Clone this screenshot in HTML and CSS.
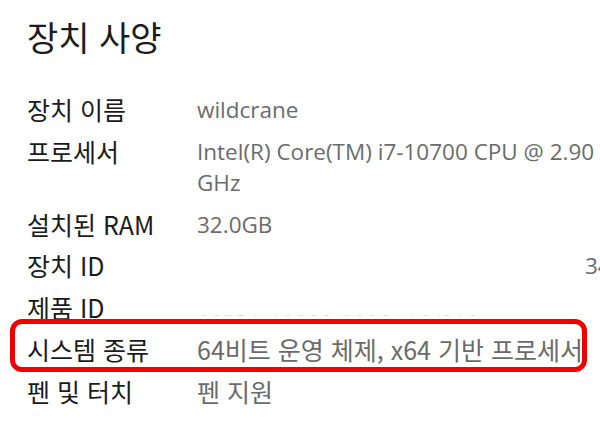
FILE: index.html
```html
<!DOCTYPE html>
<html lang="ko">
<head>
<meta charset="utf-8">
<title>장치 사양</title>
<link rel="stylesheet" href="styles.css">
</head>
<body>
<main class="page">
  <h1 class="title">장치 사양</h1>
  <dl class="specs">
    <div class="row">
      <dt class="label">장치 이름</dt>
      <dd class="value latin">wildcrane</dd>
    </div>
    <div class="row">
      <dt class="label">프로세서</dt>
      <dd class="value latin">Intel(R) Core(TM) i7-10700 CPU @ 2.90 GHz</dd>
    </div>
    <div class="row">
      <dt class="label">설치된 RAM</dt>
      <dd class="value latin">32.0GB</dd>
    </div>
    <div class="row">
      <dt class="label">장치 ID</dt>
      <dd class="value latin nowrap"><span class="mask"></span>34F1A9D2-7C</dd>
    </div>
    <div class="row">
      <dt class="label">제품 ID</dt>
      <dd class="value latin nowrap redact">00331-10000-00001-AA816</dd>
    </div>
    <div class="row highlight">
      <dt class="label">시스템 종류</dt>
      <dd class="value">64비트 운영 체제, x64 기반 프로세서</dd>
    </div>
    <div class="row">
      <dt class="label">펜 및 터치</dt>
      <dd class="value">펜 지원</dd>
    </div>
  </dl>
</main>
</body>
</html>
```

FILE: styles.css
```css
html, body {
  margin: 0;
  padding: 0;
  background: #ffffff;
  overflow: hidden;
}

body {
  width: 600px;
  height: 421px;
  font-family: "Noto Sans CJK KR", sans-serif;
  color: #1b1b1b;
}

.page {
  padding: 14px 0 0 27px;
  width: 640px;
}

.title {
  margin: 0;
  font-family: "Noto Sans CJK KR", sans-serif;
  font-weight: 400;
  font-size: 34px;
  line-height: 46px;
  color: #1b1b1b;
}

.specs {
  margin: 34px 0 0 0;
  display: flex;
  flex-direction: column;
  gap: 10.8px;
}

.row {
  display: grid;
  grid-template-columns: 170px 430px;
  position: relative;
}

.label {
  margin: 0;
  font-family: "Noto Sans CJK KR", sans-serif;
  font-size: 25px;
  line-height: 31px;
  color: #1b1b1b;
}

.value {
  margin: 0;
  font-family: "Noto Sans CJK KR", sans-serif;
  font-size: 25px;
  line-height: 31px;
  color: #6b6b6b;
}

.value.latin {
  font-family: "Open Sans", "Noto Sans CJK KR", sans-serif;
  font-size: 22.5px;
}

.nowrap {
  white-space: nowrap;
}

.mask {
  display: inline-block;
  width: 388px;
}

.redact {
  clip-path: inset(23.5px 0 0 0);
  color: #7a7a7a;
}

.highlight::after {
  content: "";
  position: absolute;
  left: -17px;
  width: 567px;
  top: -15px;
  bottom: -7px;
  border: 5px solid #ee0000;
  border-radius: 12px;
  pointer-events: none;
}
```
